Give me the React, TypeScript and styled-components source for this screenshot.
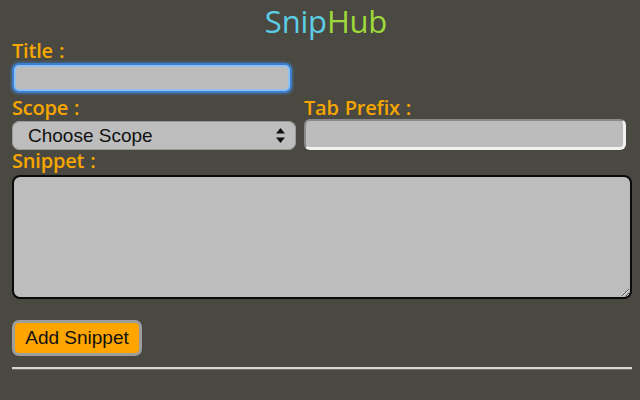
import React from 'react';
import styled, { createGlobalStyle } from 'styled-components';

const GlobalStyle = createGlobalStyle`
  html, body {
    margin: 0;
    padding: 0;
    background: #4a4941;
    width: 640px;
    height: 400px;
    overflow: hidden;
  }
`;

const Page = styled.div`
  padding: 0 8px 0 12px;
  font-family: "Open Sans", "DejaVu Sans", sans-serif;
`;

const Brand = styled.h1`
  margin: 0;
  height: 40px;
  text-align: center;
  font-size: 31px;
  line-height: 42px;
  font-weight: normal;
  letter-spacing: -0.2px;
  padding-left: 8px;
`;

const BrandPart = styled.span<{ $color: string }>`
  color: ${p => p.$color};
`;

const Label = styled.label`
  display: block;
  color: #f7a600;
  font-size: 20px;
  font-weight: 600;
  letter-spacing: -0.2px;
  word-spacing: 1px;
  height: 21px;
  line-height: 21px;
`;

const TitleInput = styled.input`
  box-sizing: border-box;
  display: block;
  width: 276px;
  height: 26px;
  margin: 4px 0 0 2px;
  background: #bcbcbc;
  border: 2px solid #8fc0f0;
  border-radius: 5px;
  box-shadow: 0 0 0 2px #3b7fd0, 0 0 3px 3px rgba(70, 140, 230, 0.5);
  outline: none;
  padding: 0 4px;
  font-size: 15px;
  caret-color: #000;
`;

const Row = styled.div`
  display: grid;
  grid-template-columns: 284px 1fr;
  column-gap: 8px;
  margin-top: 6px;
`;

const Field = styled.div`
  display: flex;
  flex-direction: column;
`;

const SelectBox = styled.div`
  position: relative;
  box-sizing: border-box;
  height: 29px;
  margin-top: 3px;
  background: #bdbdbd;
  border-radius: 8px;
  box-shadow: inset 0 0 0 1px #9a9a9a;
  display: flex;
  align-items: center;
  padding-left: 16px;
  font-family: "Liberation Sans", Arial, sans-serif;
  font-size: 19px;
  color: #111;
`;

const Arrows = styled.svg`
  position: absolute;
  right: 11px;
  top: 7px;
`;

const PrefixInput = styled.input`
  box-sizing: border-box;
  width: 322px;
  height: 31px;
  margin-top: 1px;
  background: #bcbcbc;
  border-style: solid;
  border-width: 2px 3px 3px 2px;
  border-color: #8a8a8a #f2f2f2 #f2f2f2 #8a8a8a;
  border-radius: 6px;
  outline: none;
`;

const SnippetArea = styled.textarea`
  box-sizing: border-box;
  display: block;
  width: 620px;
  height: 124px;
  margin-top: 4px;
  background: #bdbdbd;
  border: 2px solid #0a0a0a;
  border-radius: 8px;
  resize: both;
  outline: none;
`;

const AddButton = styled.button`
  display: block;
  margin-top: 21px;
  box-sizing: border-box;
  width: 130px;
  height: 36px;
  background: #ffa500;
  border: 3px solid #9e9e9e;
  border-radius: 7px;
  font-family: "Liberation Sans", Arial, sans-serif;
  font-size: 19px;
  color: #111;
  padding: 0;
`;

const Divider = styled.hr`
  margin: 11px 0 0;
  width: 620px;
  height: 0;
  border: none;
  border-top: 2px solid #d6d6d6;
  border-bottom: 1px solid #6f6e66;
`;

export default function App() {
  return (
    <>
      <GlobalStyle />
      <Page>
        <Brand>
          <BrandPart $color="#5ccde6">Snip</BrandPart>
          <BrandPart $color="#9ed83a">Hub</BrandPart>
        </Brand>
        <Label>Title :</Label>
        <TitleInput autoFocus />
        <Row>
          <Field>
            <Label>Scope :</Label>
            <SelectBox>
              Choose Scope
              <Arrows width="9" height="15" viewBox="0 0 9 15">
                <path d="M4.5 0 L9 5.5 L0 5.5 Z" fill="#111" />
                <path d="M4.5 15 L9 9.5 L0 9.5 Z" fill="#111" />
              </Arrows>
            </SelectBox>
          </Field>
          <Field>
            <Label>Tab Prefix :</Label>
            <PrefixInput />
          </Field>
        </Row>
        <Label>Snippet :</Label>
        <SnippetArea />
        <AddButton>Add Snippet</AddButton>
        <Divider />
      </Page>
    </>
  );
}
